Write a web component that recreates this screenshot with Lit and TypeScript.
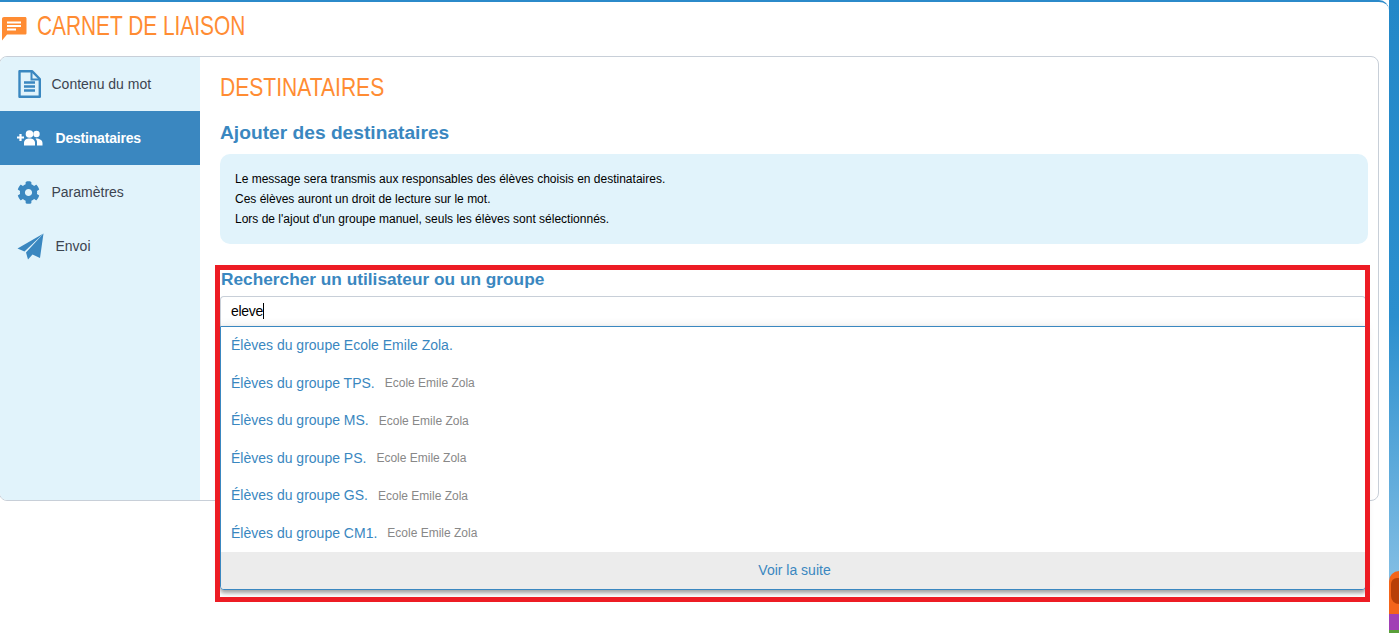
import { LitElement, html, css, svg } from "lit";
import { customElement } from "lit/decorators.js";

const docIcon = svg`<svg class="ic" viewBox="0 0 24 28" width="24" height="28"><path d="M2.500 1.200H15L22.800 9V26.800H2.500Z" fill="#e1f3fb" stroke="#3a87c0" stroke-width="2.400" stroke-linejoin="round"/><path d="M14.500 1.500V9.500H22.500" fill="none" stroke="#3a87c0" stroke-width="2"/><path d="M7 12.500H18M7 16.500H18M7 20.500H18" stroke="#3a87c0" stroke-width="2.400"/></svg>`;
const usersIcon = svg`<svg class="ic" viewBox="0 0 26 16" width="26" height="16"><path d="M0 7.500H7M3.500 4V11" stroke="#fff" stroke-width="2.200"/><circle cx="12.500" cy="4" r="3.800" fill="#fff"/><circle cx="19.500" cy="4" r="3.200" fill="#fff"/><path d="M7 15.500V13C7 10 9.500 8.600 12.500 8.600S18 10 18 13V15.500Z" fill="#fff"/><path d="M19 8.500C22.500 8.500 25.500 10 25.500 13V15.500H20V12.500C20 11 19.500 9.500 18.500 8.800Z" fill="#fff"/></svg>`;
const gearIcon = svg`<svg class="ic" viewBox="0 0 512 512" width="23" height="23"><path fill="#3a87c0" d="M487.400 315.700l-42.600-24.600c4.300-23.200 4.300-47 0-70.200l42.600-24.600c4.900-2.800 7.100-8.600 5.500-14-11.100-35.600-30-67.800-54.700-94.600-3.800-4.100-10-5.100-14.800-2.300L380.800 110c-17.900-15.400-38.500-27.300-60.800-35.100V25.800c0-5.600-3.900-10.500-9.400-11.700-36.700-8.200-74.300-7.800-109.200 0-5.500 1.200-9.400 6.100-9.400 11.700V75c-22.200 7.900-42.800 19.800-60.800 35.100L88.700 85.500c-4.900-2.800-11-1.900-14.800 2.300-24.700 26.700-43.600 58.900-54.700 94.600-1.700 5.400.6 11.200 5.500 14L67.300 221c-4.300 23.200-4.300 47 0 70.200l-42.600 24.600c-4.900 2.800-7.100 8.600-5.500 14 11.100 35.600 30 67.800 54.700 94.600 3.800 4.100 10 5.100 14.800 2.300l42.600-24.600c17.900 15.400 38.500 27.300 60.800 35.100v49.200c0 5.600 3.900 10.500 9.400 11.700 36.700 8.200 74.300 7.800 109.200 0 5.500-1.200 9.400-6.100 9.400-11.700v-49.200c22.200-7.900 42.800-19.800 60.800-35.100l42.600 24.600c4.900 2.800 11 1.900 14.800-2.300 24.700-26.700 43.600-58.900 54.700-94.600 1.500-5.500-.7-11.300-5.600-14.100zM256 336c-44.100 0-80-35.900-80-80s35.900-80 80-80 80 35.900 80 80-35.900 80-80 80z"/></svg>`;
const planeIcon = svg`<svg class="ic" viewBox="0 0 27 27" width="27" height="27"><path fill="#3a87c0" d="M26.500 0.500L0.500 15.500L7.500 18.500Z"/><path fill="#3a87c0" d="M26.500 0.500L9 19.500L11 26.500L15.500 21.500L23 25Z"/></svg>`;
const chatIcon = svg`<svg viewBox="0 0 26 25" width="26" height="25"><path fill="#ff8c33" d="M3 1H24C25 1 25.500 1.600 25.500 2.500V17C25.500 18 25 18.500 24 18.500H6L1 24.500V3C1 1.800 1.800 1 3 1Z"/><path d="M6 6.500H20M6 10H20M6 13.500H15" stroke="#fff" stroke-width="1.800"/></svg>`;

const rows = [
  ["Élèves du groupe Ecole Emile Zola.", ""],
  ["Élèves du groupe TPS.", "Ecole Emile Zola"],
  ["Élèves du groupe MS.", "Ecole Emile Zola"],
  ["Élèves du groupe PS.", "Ecole Emile Zola"],
  ["Élèves du groupe GS.", "Ecole Emile Zola"],
  ["Élèves du groupe CM1.", "Ecole Emile Zola"],
];

@customElement("app-root")
export class AppRoot extends LitElement {
  static styles = css`
    :host {
      display: block;
      height: 633px;
      width: 1399px;
      overflow: hidden;
      position: relative;
      background: #fff;
      font-family: "Liberation Sans", Arial, sans-serif;
    }
    .strip {
      position: absolute;
      top: 0;
      right: 0;
      width: 10px;
      height: 633px;
      background: linear-gradient(#2388c8, #2b8fce 50%, #7fbce3 90%);
      overflow: hidden;
    }
    .blob {
      position: absolute;
      left: 0;
      top: 571px;
      width: 10px;
      height: 62px;
      background: linear-gradient(#f4641a 0 43px, #a13fb5 43px 59px, #5a9f3a 59px);
      border-top-left-radius: 10px;
    }
    .blob::after {
      content: "";
      position: absolute;
      left: 2px;
      top: 7px;
      width: 8px;
      height: 26px;
      border-radius: 6px 0 0 8px;
      background: #b83f08;
    }
    .card {
      position: absolute;
      inset: 0 10px 0 0;
      background: #fff;
      border-top: 2px solid #2b8aca;
      border-top-right-radius: 10px;
      box-sizing: border-box;
    }
    .head {
      height: 54px;
      display: flex;
      align-items: flex-start;
      padding-left: 1px;
      gap: 10px;
      box-sizing: border-box;
    }
    .head svg {
      margin-top: 13.5px;
    }
    .title {
      margin: 11px 0 0;
      font-weight: 400;
      color: #ff8c33;
      font-size: 28px;
      line-height: 26px;
      white-space: nowrap;
      transform: scaleX(0.745);
      transform-origin: left center;
    }
    .panel {
      width: 1380px;
      height: 445px;
      margin-left: -1px;
      box-sizing: border-box;
      border: 1px solid #c8cfd8;
      border-radius: 8px;
      display: flex;
      overflow: hidden;
    }
    nav {
      width: 200px;
      flex: none;
      background: #e1f3fb;
    }
    .item {
      height: 54px;
      display: flex;
      align-items: center;
      padding-left: 17px;
      font-size: 14px;
      color: #3c4450;
      box-sizing: border-box;
    }
    .item .slot {
      width: 34.5px;
      flex: none;
      display: flex;
      align-items: center;
    }
    .item.wide .slot {
      width: 38.5px;
    }
    .item.on {
      background: #3a87c0;
      color: #fff;
      font-weight: 700;
      letter-spacing: -0.2px;
    }
    main {
      flex: 1;
      padding: 0 10px 0 20px;
      box-sizing: border-box;
    }
    h2 {
      margin: 17px 0 0;
      height: 26px;
      font-weight: 400;
      font-size: 26px;
      line-height: 26px;
      color: #ff8c33;
      transform: scaleX(0.81);
      transform-origin: left center;
      white-space: nowrap;
    }
    h3 {
      margin: 21px 0 0;
      color: #3a87c0;
      font-size: 19.2px;
      line-height: 24px;
      font-weight: 700;
    }
    .info {
      margin-top: 9px;
      height: 90px;
      box-sizing: border-box;
      background: #e1f3fb;
      border-radius: 10px;
      padding: 15px 15px;
      font-size: 12px;
      line-height: 20px;
      color: #000;
    }
    .search {
      position: absolute;
      left: 220px;
      top: 269.7px;
      width: 1146px;
    }
    .search h4 {
      margin: 0 0 0 1px;
      height: 26px;
      font-size: 17.28px;
      line-height: 18px;
      color: #3a87c0;
      font-weight: 700;
    }
    .input {
      height: 30px;
      box-sizing: border-box;
      background: #fff;
      border: 1px solid #c8cfd8;
      border-bottom: none;
      border-radius: 4px 4px 0 0;
      padding-left: 10px;
      display: flex;
      align-items: center;
      font-size: 14px;
      letter-spacing: -0.3px;
      color: #000;
    }
    .caret {
      width: 1px;
      height: 16px;
      background: #000;
    }
    .list {
      border: 1px solid #3a87c0;
      border-radius: 0 0 4px 4px;
      background: #fff;
      box-shadow: 0 3px 4px rgba(0, 0, 0, 0.35), 0 0 10px rgba(0, 0, 0, 0.1);
      overflow: hidden;
    }
    .row {
      height: 37.5px;
      padding-left: 10px;
      display: flex;
      align-items: center;
      gap: 10px;
      color: #3a87c0;
      font-size: 14px;
      white-space: nowrap;
    }
    .row small {
      color: #888;
      font-size: 12px;
      padding-top: 1px;
    }
    .more {
      height: 37px;
      padding-left: 3px;
      background: #ececec;
      color: #3a87c0;
      font-size: 14px;
      display: flex;
      align-items: center;
      justify-content: center;
    }
    .mark {
      position: absolute;
      left: 215px;
      top: 265px;
      width: 1155px;
      height: 337px;
      box-sizing: border-box;
      border: 5px solid #ed1c24;
      pointer-events: none;
    }
  `;

  render() {
    return html`
      <div class="strip"><div class="blob"></div></div>
      <div class="card">
        <header class="head">
          ${chatIcon}
          <h1 class="title">CARNET DE LIAISON</h1>
        </header>
        <section class="panel">
          <nav>
            <div class="item"><span class="slot">${docIcon}</span>Contenu du mot</div>
            <div class="item on wide"><span class="slot">${usersIcon}</span>Destinataires</div>
            <div class="item"><span class="slot">${gearIcon}</span>Paramètres</div>
            <div class="item wide"><span class="slot">${planeIcon}</span>Envoi</div>
          </nav>
          <main>
            <h2>DESTINATAIRES</h2>
            <h3>Ajouter des destinataires</h3>
            <div class="info">
              Le message sera transmis aux responsables des élèves choisis en destinataires.<br />
              Ces élèves auront un droit de lecture sur le mot.<br />
              Lors de l'ajout d'un groupe manuel, seuls les élèves sont sélectionnés.
            </div>
          </main>
        </section>
      </div>
      <div class="search">
        <h4>Rechercher un utilisateur ou un groupe</h4>
        <div class="input">eleve<span class="caret"></span></div>
        <div class="list">
          ${rows.map(
            ([a, b]) => html`<div class="row"><span>${a}</span>${b ? html`<small>${b}</small>` : ""}</div>`
          )}
          <div class="more">Voir la suite</div>
        </div>
      </div>
      <div class="mark"></div>
    `;
  }
}
